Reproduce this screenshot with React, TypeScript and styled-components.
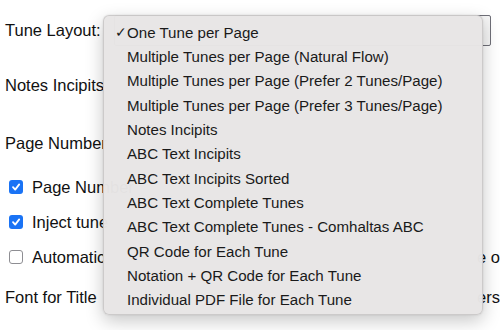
import React from "react";
import styled, { createGlobalStyle } from "styled-components";

const Global = createGlobalStyle`
  html, body { margin: 0; padding: 0; background: #ffffff; }
  body { font-family: "Liberation Sans", Arial, sans-serif; color: #111; overflow: hidden; }
  * { box-sizing: border-box; }
`;

const Page = styled.div`
  position: relative;
  width: 500px;
  height: 330px;
  overflow: hidden;
  background: #fff;
`;

const Form = styled.div`
  display: flex;
  flex-direction: column;
  padding: 15px 0 0 5px;
`;

const Row = styled.div<{ $mt?: number }>`
  display: flex;
  align-items: center;
  gap: 8px;
  margin-top: ${(p) => p.$mt ?? 0}px;
  height: ${(p) => (p.$mt === undefined ? 31 : 22)}px;
  white-space: nowrap;
`;

const Label = styled.span`
  font-size: 16.5px;
  color: #111;
`;

const SelectBox = styled.div`
  width: 377px;
  height: 31px;
  border: 1px solid #6f6f78;
  border-radius: 2px;
  background: #f6f6f6;
  margin-left: 5px;
`;

const CheckRow = styled.div<{ $mt: number }>`
  display: flex;
  align-items: center;
  gap: 9px;
  margin-top: ${(p) => p.$mt}px;
  padding-left: 4px;
  height: 22px;
  white-space: nowrap;
`;

const Box = styled.span<{ $on: boolean }>`
  width: 14px;
  height: 14px;
  border-radius: 3px;
  display: inline-flex;
  align-items: center;
  justify-content: center;
  background: ${(p) => (p.$on ? "#1a73f5" : "#ffffff")};
  border: ${(p) => (p.$on ? "none" : "1px solid #8e8e93")};
  flex: none;
`;

const Spread = styled.div`
  display: flex;
  justify-content: space-between;
  width: 100%;
`;

const Menu = styled.div`
  position: absolute;
  left: 103px;
  top: 15px;
  width: 380px;
  height: 300px;
  padding: 4px 0 0 0;
  border-radius: 6px;
  background: rgba(232, 230, 229, 0.98);
  border: 1px solid rgba(0, 0, 0, 0.12);
  box-shadow: 0 6px 18px rgba(0, 0, 0, 0.22), 0 0 2px rgba(0, 0, 0, 0.12);
  display: flex;
  flex-direction: column;
`;

const Item = styled.div`
  position: relative;
  height: 24.35px;
  display: flex;
  align-items: center;
  padding-left: 23px;
  font-family: "Liberation Sans", Arial, sans-serif;
  font-size: 15.1px;
  color: #1a1a1a;
  white-space: nowrap;
`;

const Check = styled.span`
  position: absolute;
  left: 11px;
  top: 50%;
  transform: translateY(-50%);
  font-size: 14px;
`;

const items = [
  "One Tune per Page",
  "Multiple Tunes per Page (Natural Flow)",
  "Multiple Tunes per Page (Prefer 2 Tunes/Page)",
  "Multiple Tunes per Page (Prefer 3 Tunes/Page)",
  "Notes Incipits",
  "ABC Text Incipits",
  "ABC Text Incipits Sorted",
  "ABC Text Complete Tunes",
  "ABC Text Complete Tunes - Comhaltas ABC",
  "QR Code for Each Tune",
  "Notation + QR Code for Each Tune",
  "Individual PDF File for Each Tune",
];

const Tick = () => (
  <svg width="10" height="10" viewBox="0 0 10 10">
    <path d="M2 5.2 L4.2 7.6 L8.2 2.4" fill="none" stroke="#fff" strokeWidth="1.8" strokeLinecap="round" strokeLinejoin="round" />
  </svg>
);

export default function App() {
  return (
    <Page>
      <Global />
      <Form>
        <Row>
          <Label>Tune Layout:</Label>
          <SelectBox />
        </Row>
        <Row $mt={28}>
          <Label>Notes Incipits</Label>
        </Row>
        <Row $mt={36}>
          <Label>Page Number</Label>
        </Row>
        <CheckRow $mt={22}>
          <Box $on>
            <Tick />
          </Box>
          <Label>Page Number</Label>
        </CheckRow>
        <CheckRow $mt={13}>
          <Box $on>
            <Tick />
          </Box>
          <Label>Inject tune</Label>
        </CheckRow>
        <CheckRow $mt={13}>
          <Box $on={false} />
          <Spread>
            <Label>Automatic</Label>
            <Label>e o</Label>
          </Spread>
        </CheckRow>
        <Row $mt={18}>
          <Spread>
            <Label>Font for Title</Label>
            <Label>ers</Label>
          </Spread>
        </Row>
      </Form>
      <Menu>
        {items.map((t, i) => (
          <Item key={t}>
            {i === 0 && <Check>✓</Check>}
            {t}
          </Item>
        ))}
      </Menu>
    </Page>
  );
}
